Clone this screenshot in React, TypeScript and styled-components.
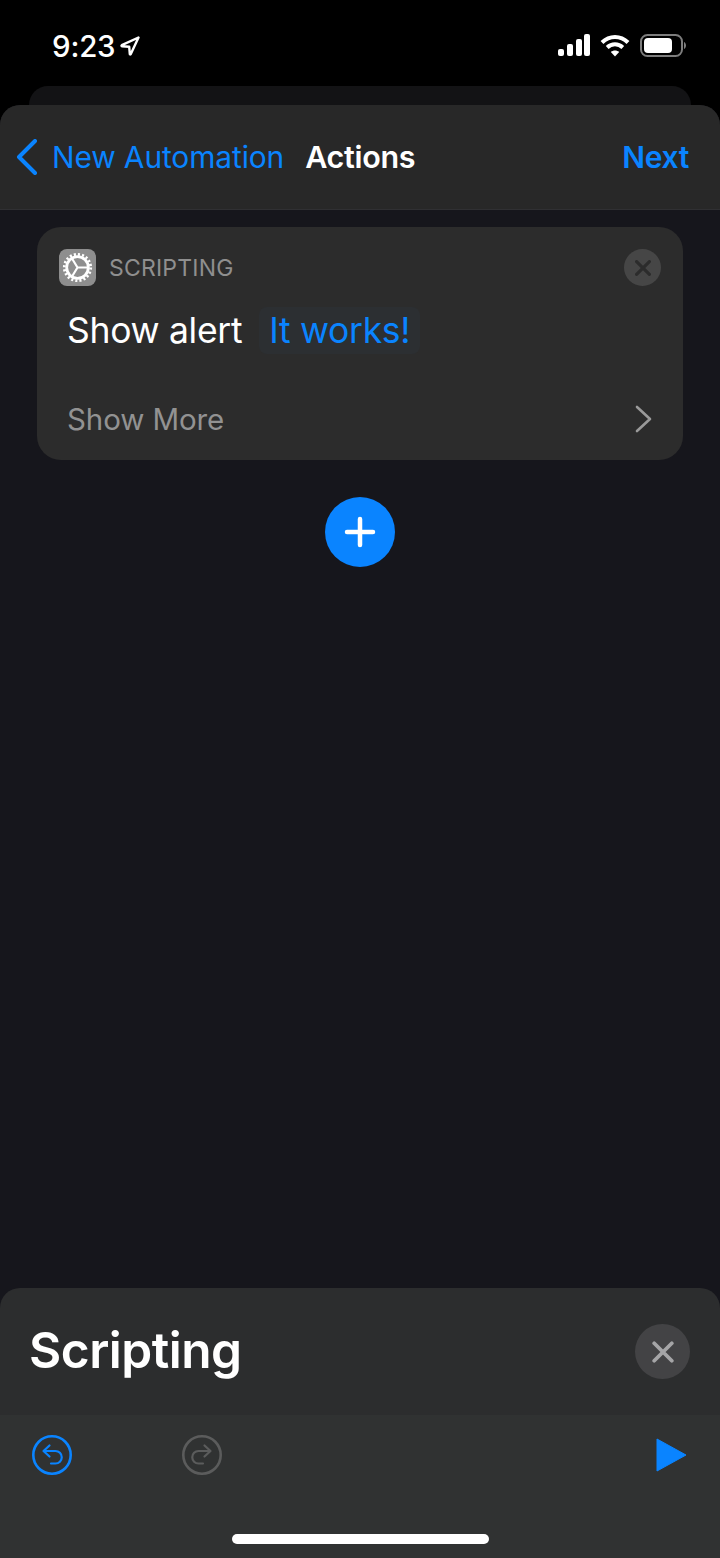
import React from "react";
import styled, { createGlobalStyle } from "styled-components";

const Global = createGlobalStyle`
  html, body { margin: 0; padding: 0; background: #000; }
  * { box-sizing: border-box; }
`;

const Page = styled.div`
  width: 720px;
  height: 1558px;
  background: #000;
  display: flex;
  flex-direction: column;
  overflow: hidden;
  font-family: Inter, "Liberation Sans", sans-serif;
  color: #fff;
`;

const StatusBar = styled.div`
  height: 86px;
  flex: none;
  display: flex;
  justify-content: space-between;
  align-items: flex-start;
  padding: 28px 34px 0 52px;
`;
const Clock = styled.div`
  display: flex;
  align-items: center;
  gap: 5px;
  font-size: 29.5px;
  line-height: 36px;
  font-weight: 500;
  letter-spacing: -0.2px;
`;
const StatusIcons = styled.div`
  display: flex;
  align-items: center;
  gap: 10px;
  height: 36px;
  margin-top: -1px;
`;

const BackSheet = styled.div`
  height: 19px;
  flex: none;
  margin: 0 29px;
  background: #131315;
  border-radius: 20px 20px 0 0;
`;

const Sheet = styled.div`
  flex: 1;
  display: flex;
  flex-direction: column;
  background: #16161c;
  border-radius: 20px 20px 0 0;
  overflow: hidden;
`;

const NavBar = styled.div`
  height: 105px;
  flex: none;
  display: flex;
  align-items: center;
  padding: 0 31px 0 16px;
  background: #282828;
  border-bottom: 1px solid #303033;
`;
const NavBack = styled.div`
  display: flex;
  align-items: center;
  gap: 14px;
  color: #0a84ff;
  font-size: 29.9px;
  letter-spacing: -0.1px;
`;
const NavTitle = styled.div`
  margin: -2px 0 0 21px;
  flex: 1;
  font-size: 30.5px;
  font-weight: 600;
  letter-spacing: -0.3px;
`;
const NavNext = styled.div`
  color: #0a84ff;
  font-size: 30px;
  font-weight: 600;
  letter-spacing: -0.3px;
`;

const Canvas = styled.div`
  flex: 1;
  display: flex;
  flex-direction: column;
  align-items: center;
  padding: 17px 37px 0;
`;

const Card = styled.div`
  width: 100%;
  height: 233px;
  flex: none;
  background: #2c2c2c;
  border-radius: 24px;
  padding: 22px 22px 0;
  display: flex;
  flex-direction: column;
`;
const CardHead = styled.div`
  display: flex;
  align-items: center;
  height: 37px;
`;
const AppIcon = styled.div`
  width: 37px;
  height: 37px;
  border-radius: 8px;
  background: #8e8e8e;
  display: flex;
  align-items: center;
  justify-content: center;
`;
const Category = styled.div`
  flex: 1;
  margin-left: 13px;
  color: #8f8f8f;
  font-size: 23px;
  letter-spacing: 0.2px;
`;
const CardClose = styled.div`
  width: 37px;
  height: 37px;
  border-radius: 50%;
  background: #464646;
  display: flex;
  align-items: center;
  justify-content: center;
`;
const ActionRow = styled.div`
  display: flex;
  align-items: center;
  margin: 22px 0 0 8px;
  height: 44px;
  font-size: 35.5px;
  letter-spacing: -0.3px;
`;
const Param = styled.span`
  margin-left: 17px;
  padding: 2px 10px;
  border-radius: 8px;
  color: #0a84ff;
  background: #2c2f32;
`;
const MoreRow = styled.div`
  display: flex;
  align-items: center;
  justify-content: space-between;
  margin: 47px 8px 0 8px;
  height: 40px;
  color: #929292;
  font-size: 29.5px;
  letter-spacing: -0.1px;
`;

const AddButton = styled.div`
  width: 70px;
  height: 70px;
  flex: none;
  margin-top: 37px;
  border-radius: 50%;
  background: #0a84ff;
  display: flex;
  align-items: center;
  justify-content: center;
`;

const Panel = styled.div`
  height: 127px;
  flex: none;
  display: flex;
  align-items: center;
  justify-content: space-between;
  padding: 0 30px 0 29px;
  background: #2c2d2e;
  border-radius: 20px 20px 0 0;
`;
const PanelTitle = styled.div`
  font-size: 49.6px;
  font-weight: 600;
  letter-spacing: -0.5px;
  margin-top: -3px;
`;
const PanelClose = styled.div`
  width: 55px;
  height: 55px;
  border-radius: 50%;
  background: #434345;
  display: flex;
  align-items: center;
  justify-content: center;
`;

const Toolbar = styled.div`
  height: 143px;
  flex: none;
  background: #303232;
  display: flex;
  flex-direction: column;
  align-items: center;
`;
const ToolRow = styled.div`
  width: 100%;
  height: 40px;
  margin-top: 20px;
  padding: 0 33px 0 32px;
  display: flex;
  align-items: center;
  gap: 110px;
`;
const RunSlot = styled.div`
  margin-left: auto;
  display: flex;
`;
const HomeBar = styled.div`
  width: 257px;
  height: 10px;
  margin-top: 59px;
  border-radius: 5px;
  background: #fff;
`;

const Arrow = () => (
  <svg width="20" height="20" viewBox="0 0 20 20">
    <path d="M18.5 1.500 1.800 9.200c-.5.300-.4 1 .2 1l7.200.5.6 7.200c0 .6.800.7 1 .2L18.500 1.500Z" fill="none" stroke="#fff" strokeWidth="2.400" strokeLinejoin="round" />
  </svg>
);
const Signal = () => (
  <svg width="32" height="22" viewBox="0 0 32 22" fill="#fff">
    <rect x="0" y="15" width="6" height="7" rx="2" />
    <rect x="9" y="10" width="6" height="12" rx="2" />
    <rect x="18" y="5" width="6" height="17" rx="2" />
    <rect x="26" y="0" width="6" height="22" rx="2" />
  </svg>
);
const Wifi = () => (
  <svg width="30" height="23" viewBox="0 0 30 23" fill="none" stroke="#fff" strokeWidth="4">
    <path d="M2 8.500C9.500 1 20.500 1 28 8.500" />
    <path d="M7.200 13.500c4.500-4.200 11-4.200 15.600 0" />
    <path d="M15 22.500 10.800 18c2.500-2 5.900-2 8.400 0L15 22.500Z" fill="#fff" stroke="none" />
  </svg>
);
const Battery = () => (
  <svg width="46" height="23" viewBox="0 0 46 23">
    <rect x="1" y="1" width="41" height="21" rx="6.500" fill="none" stroke="#7d7d7d" strokeWidth="2" />
    <rect x="4" y="4" width="28" height="15" rx="4" fill="#fff" />
    <path d="M44 8c1.300.6 2 2 2 3.500s-.7 2.900-2 3.500Z" fill="#7d7d7d" />
  </svg>
);
const Chevron = () => (
  <svg width="22" height="36" viewBox="0 0 22 36" fill="none" stroke="#0a84ff" strokeWidth="4" strokeLinecap="round" strokeLinejoin="round">
    <path d="M19 2 3 18l16 16" />
  </svg>
);
const Gear = () => (
  <svg width="33" height="33" viewBox="0 0 33 33" fill="none" stroke="#fff">
    <circle cx="16.500" cy="16.500" r="13.200" strokeWidth="2.800" strokeDasharray="2.100 2.047" />
    <circle cx="16.500" cy="16.500" r="10.800" strokeWidth="2.800" />
    <path d="M16.500 16.500H27M16.500 16.500 11 7.500M16.500 16.500 11 25.500" strokeWidth="2.200" />
  </svg>
);
const Cross = ({ size, color, width }: { size: number; color: string; width: number }) => (
  <svg width={size} height={size} viewBox="0 0 20 20" fill="none" stroke={color} strokeWidth={width} strokeLinecap="round">
    <path d="M2 2 18 18M18 2 2 18" />
  </svg>
);
const MoreChevron = () => (
  <svg width="18" height="28" viewBox="0 0 18 28" fill="none" stroke="#9a9a9a" strokeWidth="2.600" strokeLinecap="round" strokeLinejoin="round">
    <path d="M2 2l13 12L2 26" />
  </svg>
);
const Plus = () => (
  <svg width="32" height="32" viewBox="0 0 32 32" stroke="#fff" strokeWidth="4.500" strokeLinecap="round">
    <path d="M16 3v26M3 16h26" />
  </svg>
);
const Undo = () => (
  <svg width="40" height="40" viewBox="0 0 40 40" fill="none" stroke="#0a84ff" strokeLinecap="round" strokeLinejoin="round">
    <circle cx="20" cy="20" r="18.700" strokeWidth="2.600" />
    <path d="M17.500 10.500 11.500 16l6 5.500M12 16h11.500a5.500 5.500 0 0 1 0 12.500H19" strokeWidth="2.200" />
  </svg>
);
const Redo = () => (
  <svg width="40" height="40" viewBox="0 0 40 40" fill="none" stroke="#5b5c5c" strokeLinecap="round" strokeLinejoin="round">
    <circle cx="20" cy="20" r="18.700" strokeWidth="2.600" />
    <path d="M22.500 10.500 28.500 16l-6 5.500M28 16H16.500a6 6 0 0 0 0 12.500H21" strokeWidth="2.200" />
  </svg>
);
const Play = () => (
  <svg width="31" height="34" viewBox="0 0 31 34">
    <path d="M1 1 30 17 1 33Z" fill="#0a84ff" stroke="#0a84ff" strokeWidth="1" strokeLinejoin="round" />
  </svg>
);

export default function App() {
  return (
    <Page>
      <Global />
      <StatusBar>
        <Clock>
          9:23
          <Arrow />
        </Clock>
        <StatusIcons>
          <Signal />
          <Wifi />
          <Battery />
        </StatusIcons>
      </StatusBar>
      <BackSheet />
      <Sheet>
        <NavBar>
          <NavBack>
            <Chevron />
            New Automation
          </NavBack>
          <NavTitle>Actions</NavTitle>
          <NavNext>Next</NavNext>
        </NavBar>
        <Canvas>
          <Card>
            <CardHead>
              <AppIcon>
                <Gear />
              </AppIcon>
              <Category>SCRIPTING</Category>
              <CardClose>
                <Cross size={16} color="#2c2c2c" width={4} />
              </CardClose>
            </CardHead>
            <ActionRow>
              Show alert
              <Param>It works!</Param>
            </ActionRow>
            <MoreRow>
              Show More
              <MoreChevron />
            </MoreRow>
          </Card>
          <AddButton>
            <Plus />
          </AddButton>
        </Canvas>
        <Panel>
          <PanelTitle>Scripting</PanelTitle>
          <PanelClose>
            <Cross size={22} color="#a5a5a7" width={3.400} />
          </PanelClose>
        </Panel>
        <Toolbar>
          <ToolRow>
            <Undo />
            <Redo />
            <RunSlot>
              <Play />
            </RunSlot>
          </ToolRow>
          <HomeBar />
        </Toolbar>
      </Sheet>
    </Page>
  );
}
